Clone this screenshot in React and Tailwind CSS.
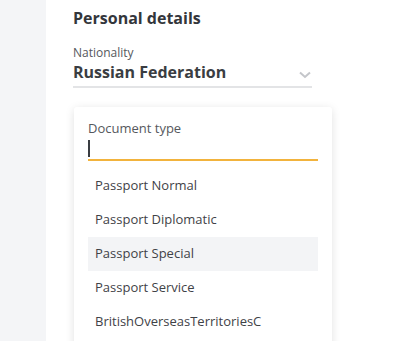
const options = [
  'Passport Normal',
  'Passport Diplomatic',
  'Passport Special',
  'Passport Service',
  'BritishOverseasTerritoriesC',
];

export default function App() {
  return (
    <div
      className="flex h-[341px] w-[400px] overflow-hidden bg-white text-[#3a3d42]"
      style={{ fontFamily: '"Open Sans", sans-serif' }}
    >
      <div className="w-[46px] shrink-0 bg-[#f4f5f7]" />
      <div className="flex-1 pl-[27px] pt-[7px]">
        <h2 className="text-[16px] font-bold leading-[22px] text-[#33363b]">Personal details</h2>

        <div className="mt-[16px] w-[239px]">
          <div className="text-[12px] leading-[16px] text-[#55585d]">Nationality</div>
          <div className="flex items-center justify-between border-b-2 border-[#e3e4e6] pb-[3px]">
            <span className="text-[16px] font-bold leading-[22px] text-[#3a3d42]">Russian Federation</span>
            <svg width="12" height="8" viewBox="0 0 12 8" className="mr-[1px] mt-[5px]">
              <path d="M1 1.5 L6 6 L11 1.5" fill="none" stroke="#c4c6ca" strokeWidth="2" />
            </svg>
          </div>
        </div>

        <div className="mt-[19px] ml-[1px] h-[260px] w-[258px] rounded-[3px] bg-white px-[14px] pt-[12px] shadow-[0_2px_10px_rgba(0,0,0,0.12)]">
          <div className="text-[13px] leading-[18px] text-[#55585d]">Document type</div>
          <div className="flex h-[24px] items-center border-b-2 border-[#f2b33d]">
            <div className="h-[17px] w-[2px] bg-[#3a3d42]" />
          </div>
          <ul className="mt-[8px]">
            {options.map((o, i) => (
              <li
                key={o}
                className={`flex h-[34px] items-center px-[7px] text-[13px] text-[#3f4247] ${
                  i === 2 ? 'bg-[#f3f4f6]' : ''
                }`}
              >
                {o}
              </li>
            ))}
          </ul>
        </div>
      </div>
    </div>
  );
}
